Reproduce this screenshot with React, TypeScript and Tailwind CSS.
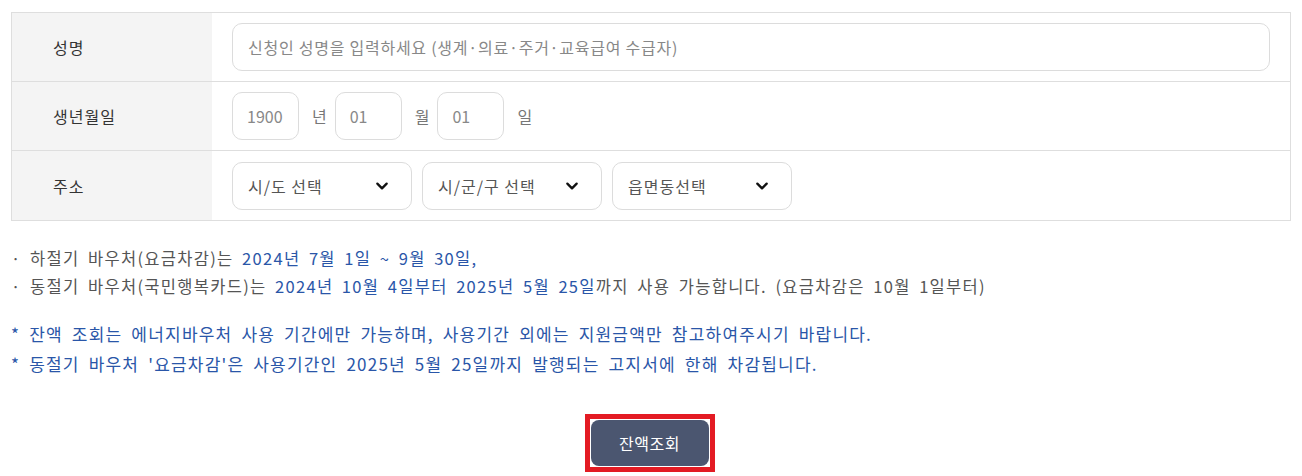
import React from 'react';

const font = { fontFamily: '"Noto Sans CJK KR", "Noto Sans", sans-serif' };

const Chevron = () => (
  <svg className="w-[14px] h-[14px]" viewBox="0 0 24 24" fill="none" stroke="#111" strokeWidth={4} strokeLinecap="round" strokeLinejoin="round">
    <path d="M4 8l8 8 8-8" />
  </svg>
);

const Select: React.FC<{ label: string }> = ({ label }) => (
  <div className="w-[180px] h-[48px] rounded-[10px] border border-[#dcdcdc] bg-white flex items-center justify-between pl-[15px] pr-[22px] text-[16px] tracking-[1px] text-[#555]">
    <span>{label}</span>
    <Chevron />
  </div>
);

const DateBox: React.FC<{ value: string }> = ({ value }) => (
  <div className="w-[67px] h-[48px] rounded-[10px] border border-[#dcdcdc] bg-white flex items-center px-[14px] text-[16px] text-[#888]">
    {value}
  </div>
);

const Unit: React.FC<{ text: string }> = ({ text }) => (
  <span className="text-[16px] text-[#777] ml-[3px] mr-[-2px]">{text}</span>
);

const Row: React.FC<{ label: string; last?: boolean; children: React.ReactNode }> = ({ label, last, children }) => (
  <div className={`flex h-[69px] ${last ? '' : 'border-b border-[#dedede]'}`}>
    <div className="w-[200px] bg-[#f4f4f4] flex items-center pl-[41px] text-[16px] tracking-[1px] text-[#333]">{label}</div>
    <div className="flex-1 flex items-center pl-[20px] pr-[20px] gap-[10px]">{children}</div>
  </div>
);

export default function App() {
  return (
    <div className="w-[1302px] h-[476px] bg-white overflow-hidden pt-[12px] pl-[11px] pr-[11px]" style={font}>
      <div className="border border-[#dedede]">
        <Row label="성명">
          <div className="flex-1 h-[48px] rounded-[10px] border border-[#dcdcdc] flex items-center px-[15px] text-[16px] tracking-[0.75px] text-[#888]">
            신청인 성명을 입력하세요 (생계·의료·주거·교육급여 수급자)
          </div>
        </Row>
        <Row label="생년월일">
          <DateBox value="1900" />
          <Unit text="년" />
          <DateBox value="01" />
          <Unit text="월" />
          <DateBox value="01" />
          <Unit text="일" />
        </Row>
        <Row label="주소" last>
          <Select label="시/도 선택" />
          <Select label="시/군/구 선택" />
          <Select label="읍면동선택" />
        </Row>
      </div>

      <div className="mt-[23px] text-[16.5px] tracking-[1.3px] [word-spacing:3.5px] leading-[28px] text-[#555]">
        <p>· 하절기 바우처(요금차감)는 <span className="text-[#2a56a8]">2024년 7월 1일 ~ 9월 30일,</span></p>
        <p>
          · 동절기 바우처(국민행복카드)는 <span className="text-[#2a56a8]">2024년 10월 4일부터 2025년 5월 25일</span>까지 사용 가능합니다. (요금차감은 10월 1일부터)
        </p>
      </div>

      <div className="mt-[19px] text-[17px] tracking-[1.2px] [word-spacing:4px] leading-[30px] text-[#2a56a8]">
        <p>* 잔액 조회는 에너지바우처 사용 기간에만 가능하며, 사용기간 외에는 지원금액만 참고하여주시기 바랍니다.</p>
        <p>* 동절기 바우처 '요금차감'은 사용기간인 2025년 5월 25일까지 발행되는 고지서에 한해 차감됩니다.</p>
      </div>

      <div className="flex justify-center mt-[35px] pr-[3px]">
        <div className="border-[5px] border-[#e31b23] p-[1px]">
          <button className="w-[118px] h-[46px] rounded-[8px] bg-[#4b5670] text-white text-[16px] tracking-[0.5px]">잔액조회</button>
        </div>
      </div>
    </div>
  );
}
